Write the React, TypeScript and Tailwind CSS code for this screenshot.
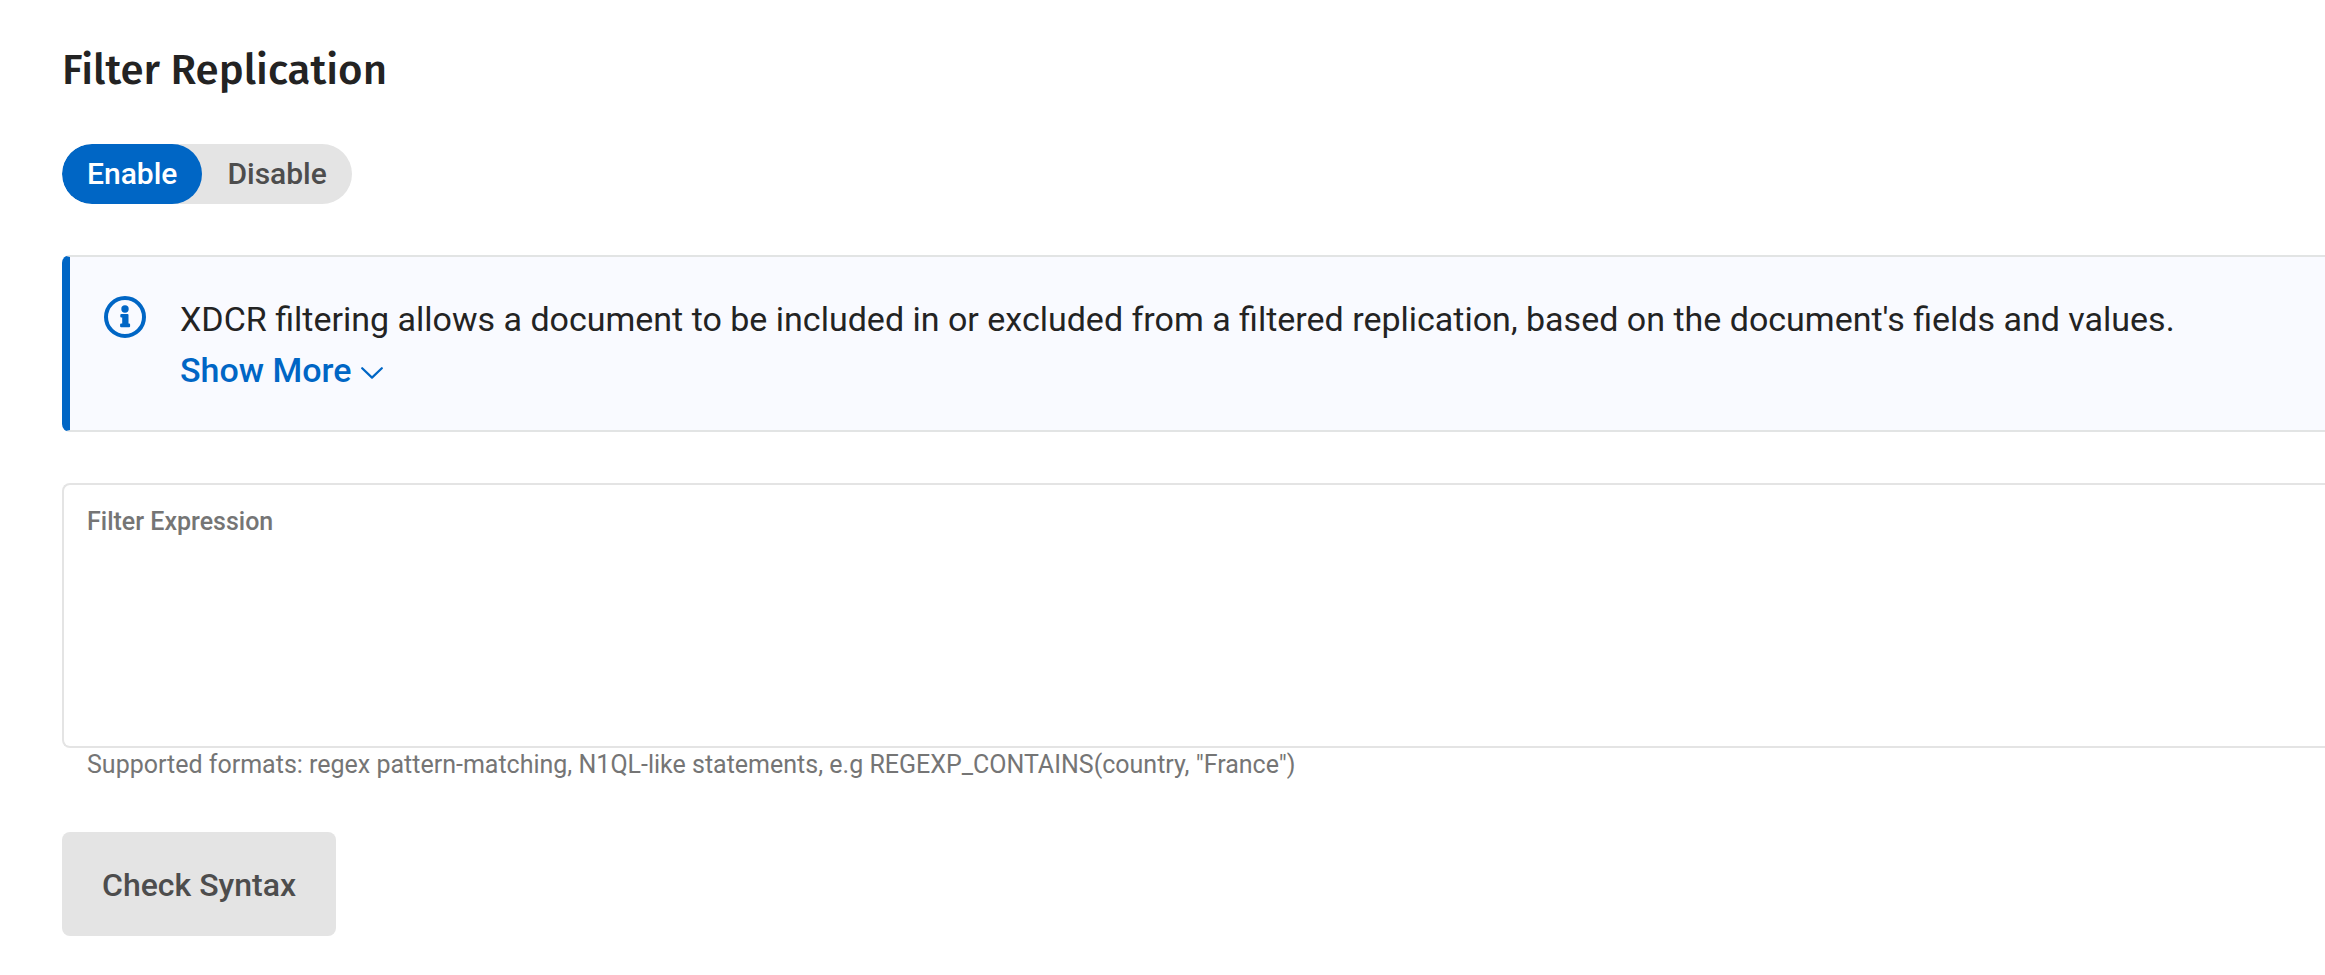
export default function App() {
  return (
    <main className="bg-white pl-[62px] pt-[45px] font-['Roboto',sans-serif] text-[#232323]">
      <h1 className="font-['Fira_Sans','Open_Sans',sans-serif] text-[42px] font-medium leading-[50px]">Filter Replication</h1>
      <div role="group" aria-label="Filter replication" className="mt-[49px] flex h-[60px] w-fit overflow-hidden rounded-full bg-[#e4e4e4] text-[30px] font-medium">
        <button type="button" aria-pressed="true" className="rounded-full bg-[#0066c5] px-[25px] pb-[2px] text-white">Enable</button>
        <button type="button" aria-pressed="false" className="px-[25px] pb-[2px] text-[#4d4d4d]">Disable</button>
      </div>
      <section className="mt-[51px] flex items-start rounded-l-lg border-y-2 border-l-8 border-y-[#e2e4e4] border-l-[#0066c5] bg-[#f9faff] pb-[34px] pt-[37px]">
        <svg className="ml-[34px] mt-[2px] size-[42px] shrink-0" viewBox="0 0 42 42" fill="none" aria-hidden="true">
          <circle cx="21" cy="21" r="19" stroke="#0066c5" strokeWidth="4" />
          <circle cx="21" cy="13" r="3.7" fill="#0066c5" />
          <path d="M17.3 18h6.2a1 1 0 0 1 1 1v8.5h.6a1 1 0 0 1 1 1v1.7a1 1 0 0 1-1 1h-8a1 1 0 0 1-1-1v-1.7a1 1 0 0 1 1-1h1.1v-6h-.9a1 1 0 0 1-1-1V19a1 1 0 0 1 1-1Z" fill="#0066c5" />
        </svg>
        <div className="pl-[34px] text-[34px] leading-[51px]">
          <p>XDCR filtering allows a document to be included in or excluded from a filtered replication, based on the document's fields and values.</p>
          <button type="button" className="flex items-center gap-[10px] font-medium text-[#0066c5]">
            Show More
            <svg className="mt-[4px] h-[12px] w-[22px]" viewBox="0 0 22 12" fill="none" stroke="currentColor" strokeWidth="2.2" strokeLinecap="round" strokeLinejoin="round" aria-hidden="true"><path d="m1.2 1.2 9.8 9.4 9.8-9.4" /></svg>
          </button>
        </div>
      </section>
      <div className="mt-[51px] rounded-l-lg border-2 border-r-0 border-[#e4e4e4] px-[23px] pt-[21px] text-[25px] leading-[32px]">
        <label htmlFor="filter-expression" className="block font-medium text-[#757575]">Filter Expression</label>
        <textarea id="filter-expression" aria-describedby="filter-hint" className="block h-[208px] w-full resize-none outline-none" />
      </div>
      <p id="filter-hint" className="pl-[25px] text-[25px] leading-[34px] text-[#757575]">Supported formats: regex pattern-matching, N1QL-like statements, e.g REGEXP_CONTAINS(country, "France")</p>
      <button type="button" className="mt-[50px] h-[104px] rounded-lg bg-[#e4e4e4] px-[40px] pt-[2px] text-[32px] font-medium text-[#4d4d4d]">Check Syntax</button>
    </main>
  );
}
